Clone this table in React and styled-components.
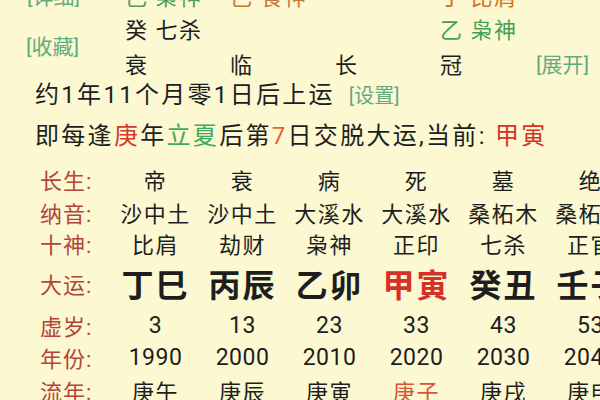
import styled, { createGlobalStyle } from 'styled-components';

const GlobalStyle = createGlobalStyle`
  html, body {
    margin: 0;
    padding: 0;
    background: #fcf8d2;
    overflow: hidden;
  }
  body {
    width: 600px;
    height: 400px;
    font-family: Roboto, "Noto Sans CJK SC", sans-serif;
    color: #1e1e1e;
  }
`;

const Page = styled.div`
  margin-top: -20px;
  width: 600px;
`;

const TopGrid = styled.div`
  display: grid;
  grid-template-columns: 125px repeat(4, 105px) 1fr;
  grid-template-rows: 30px 35px 35px;
  align-items: center;
`;

const Link = styled.span`
  color: #62ab7e;
  font-size: ${p => p.size || 21}px;
  letter-spacing: 0;
  margin-left: ${p => p.indent || 0}px;
  white-space: nowrap;
`;

const SideLink = styled(Link)`
  grid-column: 1;
  grid-row: ${p => p.rows};
  align-self: center;
`;

const Pillar = styled.span`
  grid-column: ${p => p.col};
  grid-row: ${p => p.row};
  font-size: 22px;
  letter-spacing: 1.5px;
  white-space: nowrap;
  color: ${p => p.color || '#1e1e1e'};
`;

const Line = styled.div`
  padding-left: 35px;
  height: 30px;
  line-height: 30px;
  margin-top: ${p => p.gap || 0}px;
  font-size: 24px;
  letter-spacing: 2.3px;
  white-space: nowrap;
`;

const Mark = styled.span`
  color: ${p => p.color};
`;

const Table = styled.div`
  margin-top: 11px;
  padding-left: 40px;
  display: grid;
  grid-template-columns: 72px repeat(6, 87px);
`;

const Row = styled.div`
  display: contents;
`;

const Label = styled.div`
  height: ${p => p.h}px;
  display: flex;
  align-items: center;
  color: #b4443a;
  font-size: 22px;
  letter-spacing: 1px;
  white-space: nowrap;
`;

const Cell = styled.div`
  height: ${p => p.h}px;
  display: flex;
  align-items: center;
  justify-content: center;
  white-space: nowrap;
  font-size: ${p => (p.big ? 32 : p.num ? 23 : 22)}px;
  font-weight: ${p => (p.big ? 700 : 400)};
  letter-spacing: ${p => (p.big ? 2 : p.num ? 0.5 : 1.5)}px;
  color: ${p => (p.hot ? (p.big ? '#d5302a' : '#d8553a') : '#1e1e1e')};
`;

const rows = [
  { label: '长生:', h: 34, cells: ['帝', '衰', '病', '死', '墓', '绝'] },
  { label: '纳音:', h: 32, cells: ['沙中土', '沙中土', '大溪水', '大溪水', '桑柘木', '桑柘木'] },
  { label: '十神:', h: 30, cells: ['比肩', '劫财', '枭神', '正印', '七杀', '正官'] },
  { label: '大运:', h: 50, big: true, cells: ['丁巳', '丙辰', '乙卯', '甲寅', '癸丑', '壬子'] },
  { label: '虚岁:', h: 34, num: true, cells: ['3', '13', '23', '33', '43', '53'] },
  { label: '年份:', h: 30, num: true, cells: ['1990', '2000', '2010', '2020', '2030', '2040'] },
  { label: '流年:', h: 36, cells: ['庚午', '庚辰', '庚寅', '庚子', '庚戌', '庚申'] },
];

const current = 3;

export default function App() {
  return (
    <>
      <GlobalStyle />
      <Page>
        <TopGrid>
          <SideLink rows="1" indent={27}>[详细]</SideLink>
          <Pillar col={2} row={1} color="#4d9c55">己 枭神</Pillar>
          <Pillar col={3} row={1} color="#c07a32">己 食神</Pillar>
          <Pillar col={5} row={1} color="#d37422">丁 比肩</Pillar>

          <SideLink rows="2 / 4" indent={26}>[收藏]</SideLink>
          <Pillar col={2} row={2}>癸 七杀</Pillar>
          <Pillar col={5} row={2} color="#45a052">乙 枭神</Pillar>

          <Pillar col={2} row={3}>衰</Pillar>
          <Pillar col={3} row={3}>临</Pillar>
          <Pillar col={4} row={3}>长</Pillar>
          <Pillar col={5} row={3}>冠</Pillar>
          <Pillar col={6} row={3}><Link indent={-9}>[展开]</Link></Pillar>
        </TopGrid>

        <Line>
          约1年11个月零1日后上运<Link size={20} indent={14}>[设置]</Link>
        </Line>
        <Line gap={11}>
          即每逢<Mark color="#d23a2c">庚</Mark>年<Mark color="#3fa95c">立夏</Mark>后第<Mark color="#e0662c">7</Mark>日交脱大运,当前: <Mark color="#d5332a">甲寅</Mark>
        </Line>

        <Table>
          {rows.map(r => (
            <Row key={r.label}>
              <Label h={r.h}>{r.label}</Label>
              {r.cells.map((c, i) => (
                <Cell
                  key={i}
                  h={r.h}
                  big={r.big}
                  num={r.num}
                  hot={i === current && (r.big || r.label === '流年:')}
                >
                  {c}
                </Cell>
              ))}
            </Row>
          ))}
        </Table>
      </Page>
    </>
  );
}
